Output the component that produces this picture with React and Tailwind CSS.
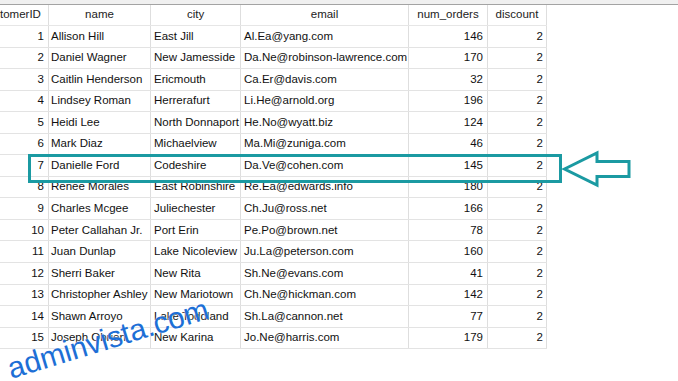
import React from 'react';

const rows = [
  [1, 'Allison Hill', 'East Jill', 'Al.Ea@yang.com', 146, 2],
  [2, 'Daniel Wagner', 'New Jamesside', 'Da.Ne@robinson-lawrence.com', 170, 2],
  [3, 'Caitlin Henderson', 'Ericmouth', 'Ca.Er@davis.com', 32, 2],
  [4, 'Lindsey Roman', 'Herrerafurt', 'Li.He@arnold.org', 196, 2],
  [5, 'Heidi Lee', 'North Donnaport', 'He.No@wyatt.biz', 124, 2],
  [6, 'Mark Diaz', 'Michaelview', 'Ma.Mi@zuniga.com', 46, 2],
  [7, 'Danielle Ford', 'Codeshire', 'Da.Ve@cohen.com', 145, 2],
  [8, 'Renee Morales', 'East Robinshire', 'Re.Ea@edwards.info', 180, 2],
  [9, 'Charles Mcgee', 'Juliechester', 'Ch.Ju@ross.net', 166, 2],
  [10, 'Peter Callahan Jr.', 'Port Erin', 'Pe.Po@brown.net', 78, 2],
  [11, 'Juan Dunlap', 'Lake Nicoleview', 'Ju.La@peterson.com', 160, 2],
  [12, 'Sherri Baker', 'New Rita', 'Sh.Ne@evans.com', 41, 2],
  [13, 'Christopher Ashley', 'New Mariotown', 'Ch.Ne@hickman.com', 142, 2],
  [14, 'Shawn Arroyo', 'Lake Toddland', 'Sh.La@cannon.net', 77, 2],
  [15, 'Joseph Obrien', 'New Karina', 'Jo.Ne@harris.com', 179, 2],
];

const cols = 'grid grid-cols-[74px_102px_90px_168px_79px_59px]';
const cell = 'border-r border-[#dedede] whitespace-nowrap overflow-hidden';

const App = () => {
  return (
    <div className="relative w-[678px] h-[381px] bg-white overflow-hidden font-['Liberation_Sans',Arial,sans-serif] text-[11.5px] text-[#111]">
      <div className="h-[5px] bg-[#f0f0f0] border-b border-[#a3a3a3]" />

      <div className="ml-[-25px] w-[572px]">
        {/* header */}
        <div className={`${cols} h-[21px] items-center text-[#222] border-b border-[#e6e6e6]`}>
          {['customerID', 'name', 'city', 'email', 'num_orders', 'discount'].map((h) => (
            <div key={h} className={`${cell} h-full flex items-center justify-center`}>
              {h}
            </div>
          ))}
        </div>

        {rows.map((r) => (
          <div key={r[0]} className={`${cols} h-[21.55px] border-b border-[#e3e3e3]`}>
            <div className={`${cell} flex items-center justify-end pr-[4px]`}>{r[0]}</div>
            <div className={`${cell} flex items-center pl-[2px]`}>{r[1]}</div>
            <div className={`${cell} flex items-center pl-[3px]`}>{r[2]}</div>
            <div className={`${cell} flex items-center pl-[3px]`}>{r[3]}</div>
            <div className={`${cell} flex items-center justify-end pr-[4px]`}>{r[4]}</div>
            <div className={`${cell} flex items-center justify-end pr-[3px]`}>{r[5]}</div>
          </div>
        ))}
      </div>

      {/* highlight box on row 7 */}
      <div className="absolute left-[28px] top-[154px] w-[534px] h-[29px] border-[3px] border-[#1b9aa2]" />

      {/* arrow */}
      <svg className="absolute left-[560px] top-[150px]" width="74" height="40" viewBox="0 0 74 40">
        <path
          d="M4.5 19 L37 3 L37 11.5 L69 11.5 L69 26.5 L37 26.5 L37 35 Z"
          fill="none"
          stroke="#1b9aa2"
          strokeWidth="3"
          strokeLinejoin="miter"
        />
      </svg>

      {/* watermark */}
      <div className="absolute left-[4px] top-[355px] origin-top-left rotate-[-17deg] text-[30px] text-[#1d6fd6] font-['Liberation_Sans',Arial,sans-serif] leading-none [text-shadow:0_0_2px_#fff]">
        adminvista.com
      </div>
    </div>
  );
};

export default App;
